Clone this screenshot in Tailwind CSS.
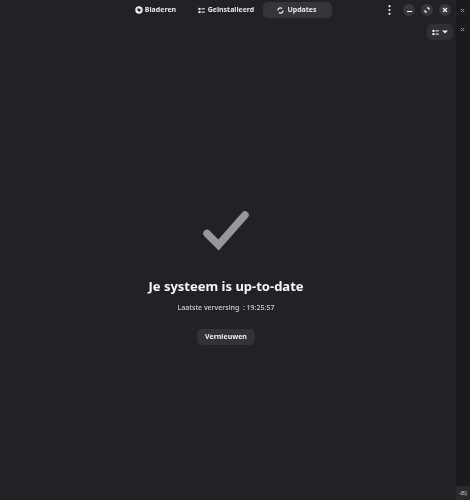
<!DOCTYPE html>
<html lang="nl">
<head>
    <meta charset="UTF-8">
    <title>Software</title>
    <script src="https://cdn.jsdelivr.net/npm/@tailwindcss/browser@4"></script>
</head>
<body class="w-[470px] h-[500px] overflow-hidden bg-[#1c1c1f] font-['Noto_Sans',sans-serif] text-white">
    <div class="relative flex h-[500px]">
        <!-- main window -->
        <div class="w-[456px] h-full bg-[#222226] flex flex-col">
            <header class="relative h-[22px] shrink-0 flex justify-center will-change-transform">
                <nav class="flex mt-[2px] mr-[4px] gap-[1px] text-[7px] font-bold text-[#e8e8ea]">
                    <button class="w-[70px] h-[16px] rounded-[5px] flex items-center justify-center gap-[2px]">
                        <svg class="w-[8px] h-[8px]" viewBox="0 0 8 8"><circle cx="4" cy="4" r="3.7" fill="#f0f0f0"/><path d="M2.2 2.2 5.8 3 5.2 5.8 2.8 5z" fill="#222226"/></svg>
                        Bladeren
                    </button>
                    <button class="w-[70px] h-[16px] pr-[1px] rounded-[5px] flex items-center justify-center gap-[3px]">
                        <svg class="w-[7px] h-[7px]" viewBox="0 0 8 8" fill="#f0f0f0"><rect x="0.5" y="1" width="2.4" height="2.4"/><rect x="0.5" y="4.6" width="2.4" height="2.4"/><rect x="4" y="1.5" width="3.8" height="1.2"/><rect x="4" y="5.2" width="3.8" height="1.2"/></svg>
                        Geïnstalleerd
                    </button>
                    <button class="w-[69px] h-[16px] rounded-[5px] bg-[#36363a] flex items-center justify-center gap-[3px]">
                        <svg class="w-[7px] h-[7px]" viewBox="0 0 8 8" fill="none" stroke="#f0f0f0" stroke-width="1.4"><path d="M1 4a3 3 0 0 1 4.8-2.4M7 4a3 3 0 0 1-4.8 2.4"/></svg>
                        Updates
                    </button>
                </nav>
                <div class="absolute right-[5px] top-[4px] flex items-center gap-[6px]">
                    <svg class="w-[3px] h-[10px] mr-[6px]" viewBox="0 0 3 10" fill="#f0f0f0"><circle cx="1.5" cy="1.2" r="1.1"/><circle cx="1.5" cy="5" r="1.1"/><circle cx="1.5" cy="8.8" r="1.1"/></svg>
                    <span class="w-[12px] h-[12px] rounded-full bg-[#38383c] flex items-center justify-center"><span class="w-[5px] h-[1px] mt-[2px] bg-white"></span></span>
                    <span class="w-[12px] h-[12px] rounded-full bg-[#38383c] flex items-center justify-center">
                        <svg class="w-[6px] h-[6px]" viewBox="0 0 6 6" fill="none" stroke="#f0f0f0" stroke-width="1.3"><path d="M1 5V3.2M1 5h1.8M5 1v1.8M5 1H3.2"/></svg>
                    </span>
                    <span class="w-[12px] h-[12px] rounded-full bg-[#38383c] flex items-center justify-center">
                        <svg class="w-[6px] h-[6px]" viewBox="0 0 6 6" stroke="#f0f0f0" stroke-width="1.3"><path d="M1 1 5 5M5 1 1 5"/></svg>
                    </span>
                </div>
            </header>

            <div class="flex justify-end pr-[3px] mt-[2px]">
                <button class="w-[26px] h-[16px] rounded-[5px] bg-[#313135] flex items-center justify-center gap-[3px]">
                    <svg class="w-[7px] h-[7px]" viewBox="0 0 8 8" fill="#f0f0f0"><rect x="0.5" y="1" width="2.4" height="2.4"/><rect x="0.5" y="4.6" width="2.4" height="2.4"/><rect x="4" y="1.5" width="3.8" height="1.2"/><rect x="4" y="5.2" width="3.8" height="1.2"/></svg>
                    <svg class="w-[6px] h-[4px]" viewBox="0 0 6 4" fill="#f0f0f0"><path d="M0 .5h6L3 3.5z"/></svg>
                </button>
            </div>

            <main class="flex flex-col items-center mt-[170px] ml-[-4px] will-change-transform">
                <svg class="w-[46px] h-[42px]" viewBox="0 0 46 42" fill="none"><path d="M4 23.5 15.5 35 42 5" stroke="#98989a" stroke-width="7.5" stroke-linecap="round" stroke-linejoin="miter"/></svg>
                <h1 class="mt-[24px] text-[13px] leading-[20px] font-bold text-[#f6f6f6]">Je systeem is up-to-date</h1>
                <p class="mt-[6px] text-[7px] leading-[12px] font-medium text-[#d5d5d7]">Laatste verversing&nbsp; : 19:25:57</p>
                <button class="mt-[15px] w-[58px] h-[16px] rounded-[5px] bg-[#333337] text-[7px] font-bold text-[#eeeeee]">Vernieuwen</button>
            </main>
        </div>

        <!-- window behind, right edge -->
        <div class="relative flex-1 h-full bg-[#1b1b1e]">
            <svg class="absolute left-[4px] top-[8px] w-[5px] h-[5px]" viewBox="0 0 6 6" stroke="#8f8f91" stroke-width="1.2"><path d="M1 1 5 5M5 1 1 5"/></svg>
            <svg class="absolute left-[4px] top-[27px] w-[5px] h-[5px]" viewBox="0 0 6 6" stroke="#8f8f91" stroke-width="1.2"><path d="M1 1 5 5M5 1 1 5"/></svg>
            <span class="absolute left-0 bottom-0 w-[14px] h-[14px] bg-[#2a2a2d] rounded-tl-[3px] text-[6px] leading-[14px] text-center text-[#c8c8c8]">‹B)</span>
        </div>
    </div>
</body>
</html>
